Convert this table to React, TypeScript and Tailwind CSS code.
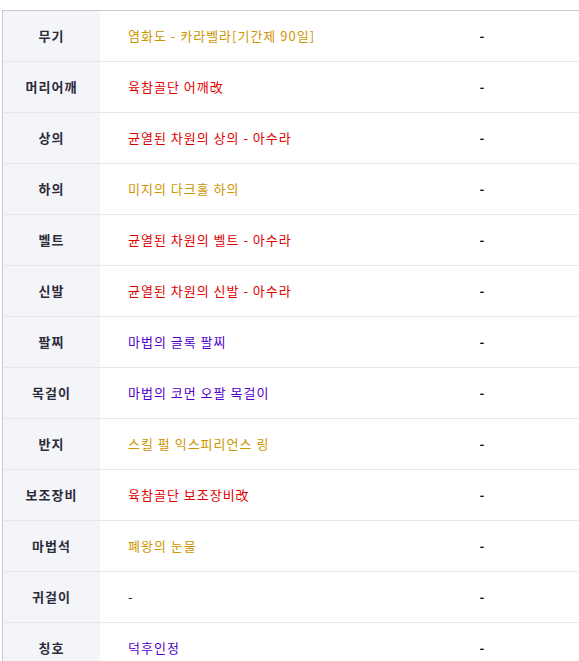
type Tone = "gold" | "red" | "purple" | "none";

interface EquipRow {
  slot: string;
  name: string;
  tone: Tone;
}

const rows: EquipRow[] = [
  { slot: "무기", name: "염화도 - 카라벨라[기간제 90일]", tone: "gold" },
  { slot: "머리어깨", name: "육참골단 어깨改", tone: "red" },
  { slot: "상의", name: "균열된 차원의 상의 - 아수라", tone: "red" },
  { slot: "하의", name: "미지의 다크홀 하의", tone: "gold" },
  { slot: "벨트", name: "균열된 차원의 벨트 - 아수라", tone: "red" },
  { slot: "신발", name: "균열된 차원의 신발 - 아수라", tone: "red" },
  { slot: "팔찌", name: "마법의 글록 팔찌", tone: "purple" },
  { slot: "목걸이", name: "마법의 코먼 오팔 목걸이", tone: "purple" },
  { slot: "반지", name: "스킬 펄 익스피리언스 링", tone: "gold" },
  { slot: "보조장비", name: "육참골단 보조장비改", tone: "red" },
  { slot: "마법석", name: "폐왕의 눈물", tone: "gold" },
  { slot: "귀걸이", name: "-", tone: "none" },
  { slot: "칭호", name: "덕후인정", tone: "purple" },
];

const toneClass: Record<Tone, string> = {
  gold: "text-[#cc9600]",
  red: "text-[#e00000]",
  purple: "text-[#5200cc]",
  none: "text-[#111111]",
};

export default function App() {
  return (
    <div className="min-h-[661px] bg-white pt-[10px] font-['Noto_Sans_CJK_KR','Noto_Sans',sans-serif] text-[13px] tracking-[1px]">
      <div className="ml-[2px] w-[577px] border-l border-t border-l-[#c8c9d8] border-t-[#c9c9d4]">
        {rows.map((row) => (
          <div
            key={row.slot}
            className="grid h-[51px] grid-cols-[97px_286px_1fr] border-b border-[#e6e6eb]"
          >
            <div className="flex items-center justify-center bg-[#f4f5f9] font-bold text-[#2b2b3a]">
              {row.slot}
            </div>
            <div className={`flex items-center pl-[28px] ${toneClass[row.tone]}`}>
              {row.name}
            </div>
            <div className="flex items-center justify-center font-bold text-[#111111]">
              -
            </div>
          </div>
        ))}
      </div>
    </div>
  );
}
